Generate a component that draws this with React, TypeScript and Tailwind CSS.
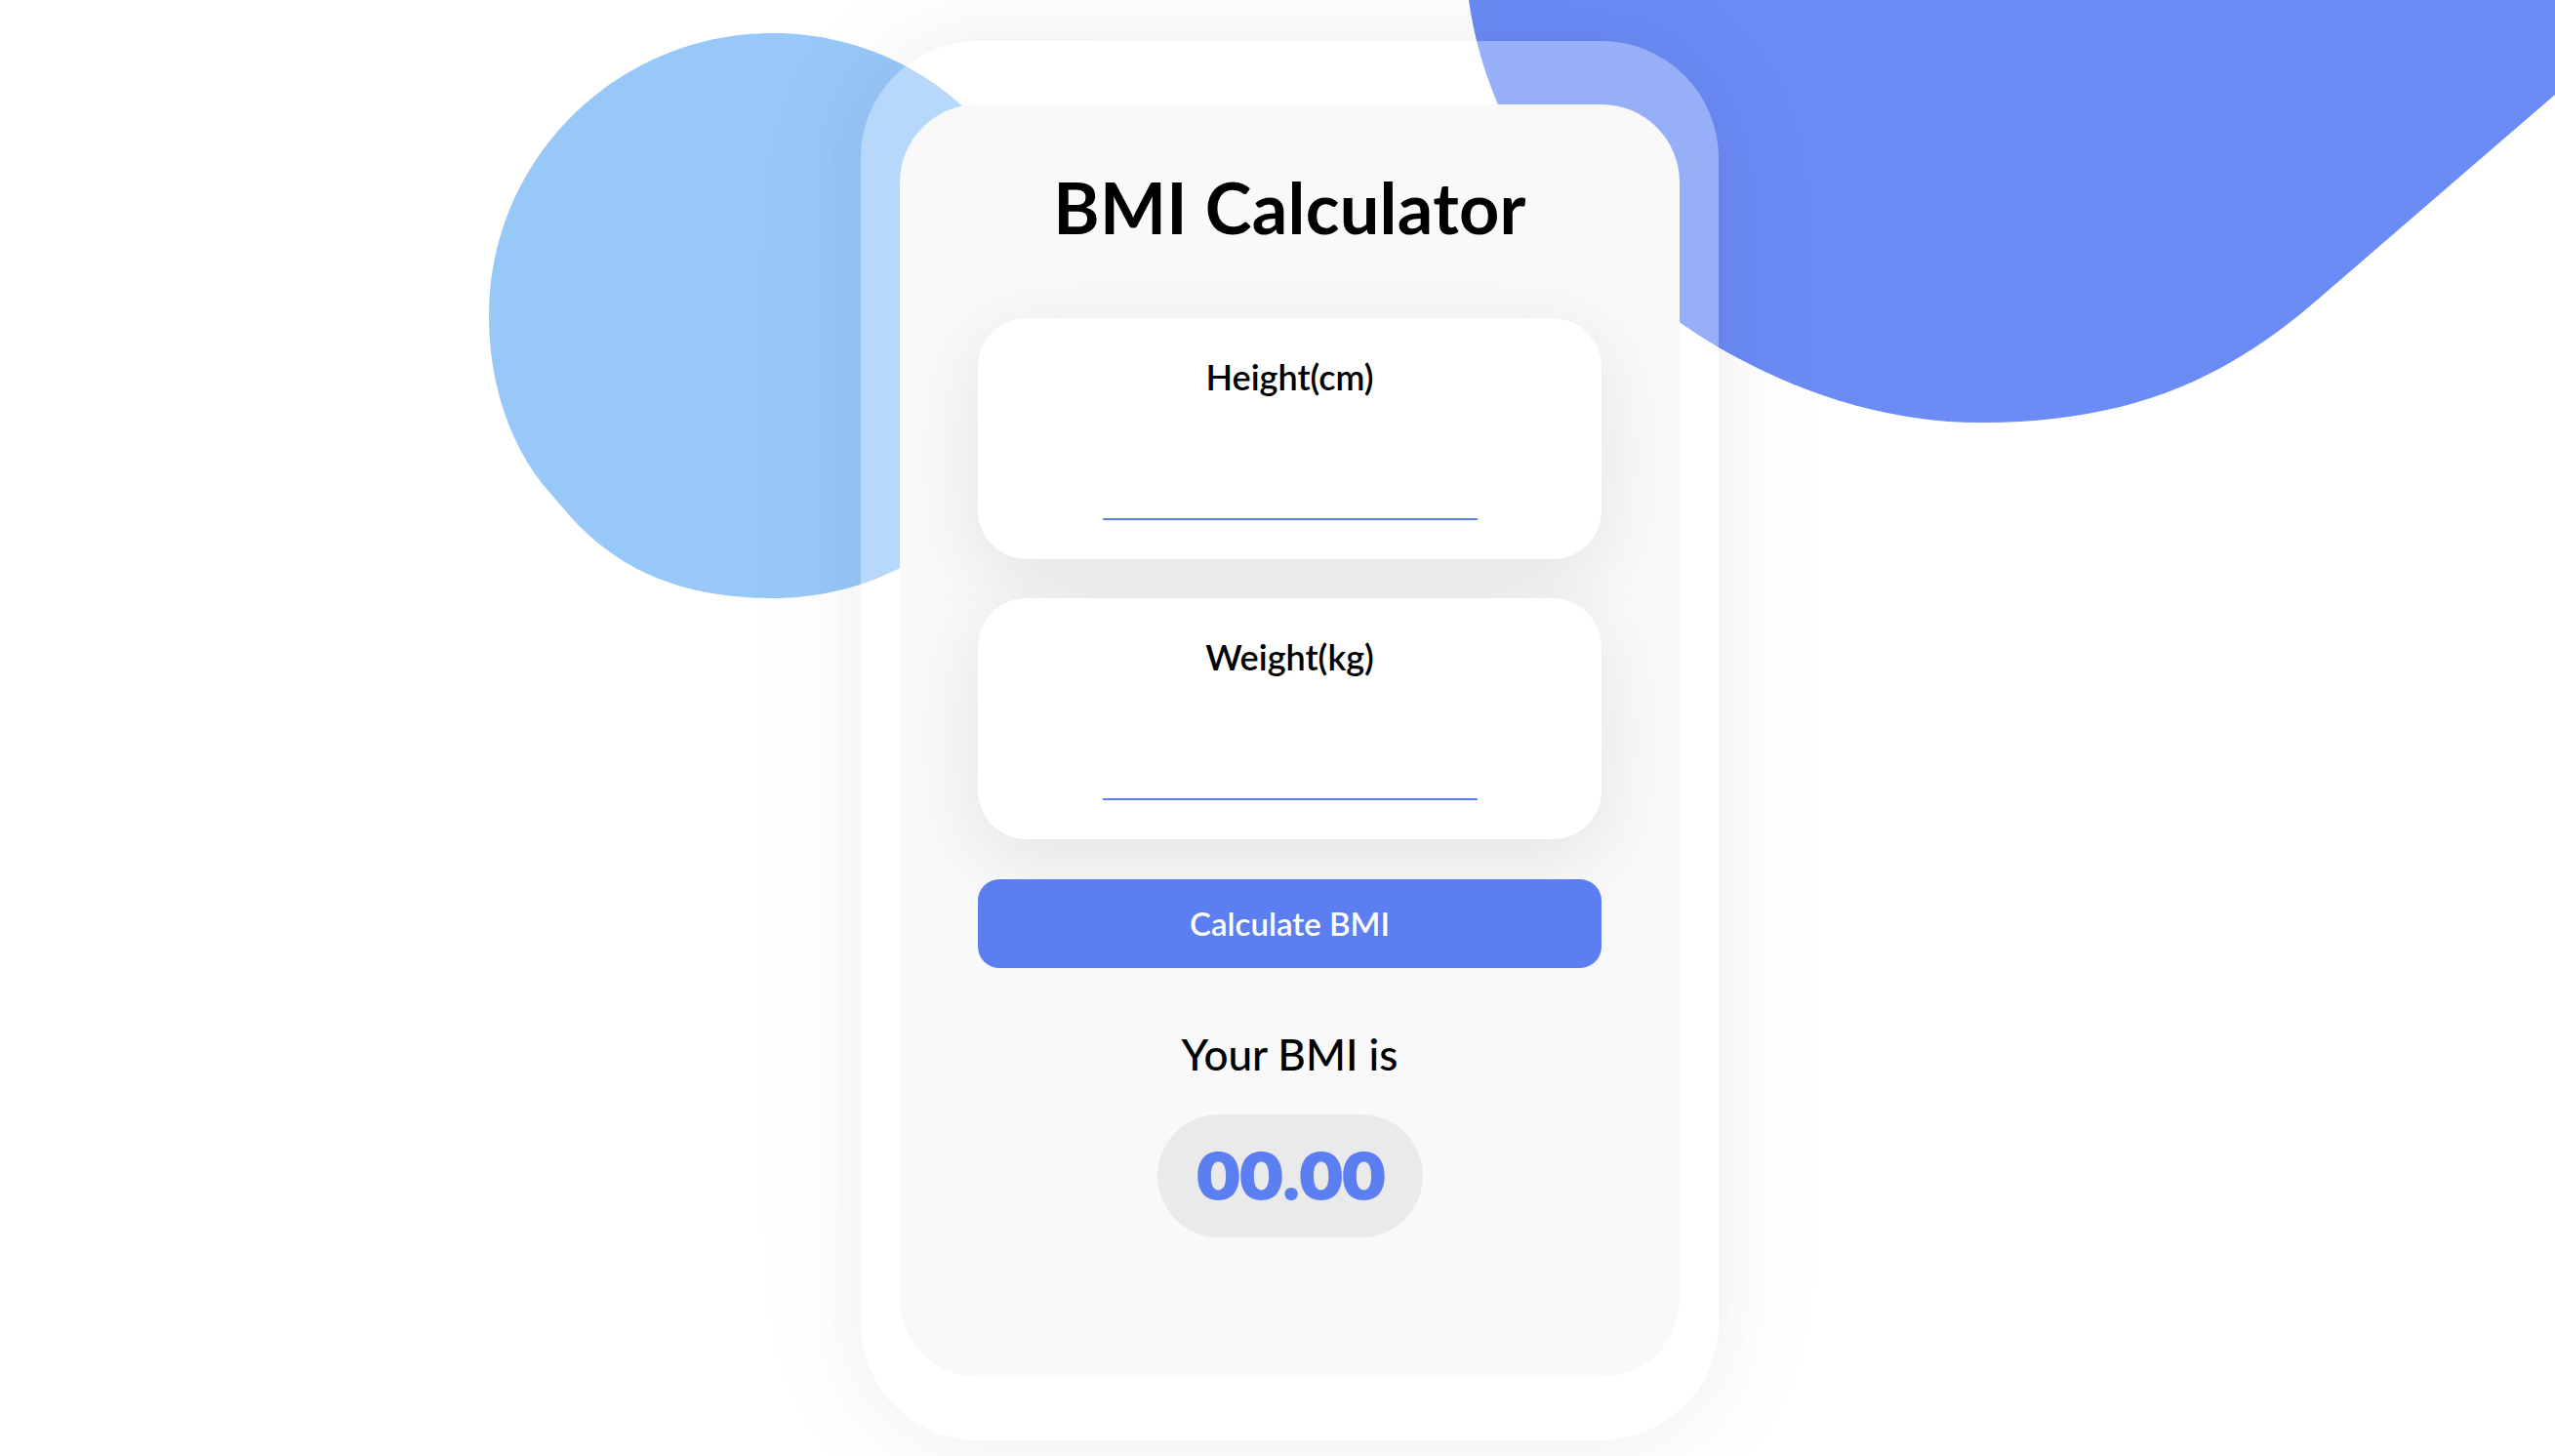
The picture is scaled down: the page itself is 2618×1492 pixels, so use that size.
import React from "react";

function Field({ label }: { label: string }) {
  return (
    <div className="flex w-[639px] flex-col items-center rounded-[50px] bg-white pt-[42px] pb-[40px] shadow-[0_20px_80px_rgba(0,0,0,0.09)]">
      <label className="text-[36px] leading-[36px] font-semibold text-black">{label}</label>
      <input
        type="text"
        aria-label={label}
        className="mt-[69px] h-[60px] w-[384px] border-b-2 border-[#5b7ef0] bg-transparent text-center text-[32px] outline-none"
      />
    </div>
  );
}

export default function App() {
  return (
    <div className="relative h-[1492px] w-[2618px] overflow-hidden bg-white font-['Lato','Noto_Sans',sans-serif]">
      <svg
        className="absolute inset-0"
        width="2618"
        height="1492"
        viewBox="0 0 2618 1492"
        aria-hidden="true"
      >
        <path
          d="M 792 34 C 952 34 1081 163 1081 323 C 1081 483 952 613 792 613 C 700 613 635 585 585 530 L 555 495 C 520 450 501 390 501 323 C 501 163 632 34 792 34 Z"
          fill="#98c8f8"
        />
        <path
          d="M 1505 0 C 1540 250 1800 433 2028 433 C 2180 433 2280 390 2377 305 L 2618 97 L 2618 0 Z"
          fill="#6b8bf5"
        />
      </svg>

      <div className="relative flex justify-center pt-[42px] pl-[25px]">
        <div className="flex h-[1434px] w-[879px] rounded-[120px] bg-white/30 px-[40px] py-[65px] shadow-[0_0_70px_rgba(0,0,0,0.045),0_0_160px_rgba(0,0,0,0.04)]">
          <div className="flex w-full flex-col items-center rounded-[80px] bg-[#f9f9f9] pt-[69px]">
            <h1 className="text-[72px] leading-[72px] font-bold tracking-[0.3px] text-black">BMI Calculator</h1>

            <div className="mt-[78px] flex flex-col items-center gap-[40px]">
              <Field label="Height(cm)" />
              <Field label="Weight(kg)" />
            </div>

            <button className="mt-[41px] h-[91px] w-[639px] rounded-[22px] bg-[#5b7ef0] text-[33px] font-semibold text-white">
              Calculate BMI
            </button>

            <p className="mt-[66px] text-[44px] leading-[44px] font-medium text-black">Your BMI is</p>

            <div className="mt-[40px] flex h-[126px] w-[272px] items-center justify-center rounded-full bg-[#eaeaea]">
              <span className="font-['Inter',sans-serif] text-[66px] leading-[66px] font-black tracking-[-3px] text-[#5b7ef0]">
                00.00
              </span>
            </div>
          </div>
        </div>
      </div>
    </div>
  );
}
